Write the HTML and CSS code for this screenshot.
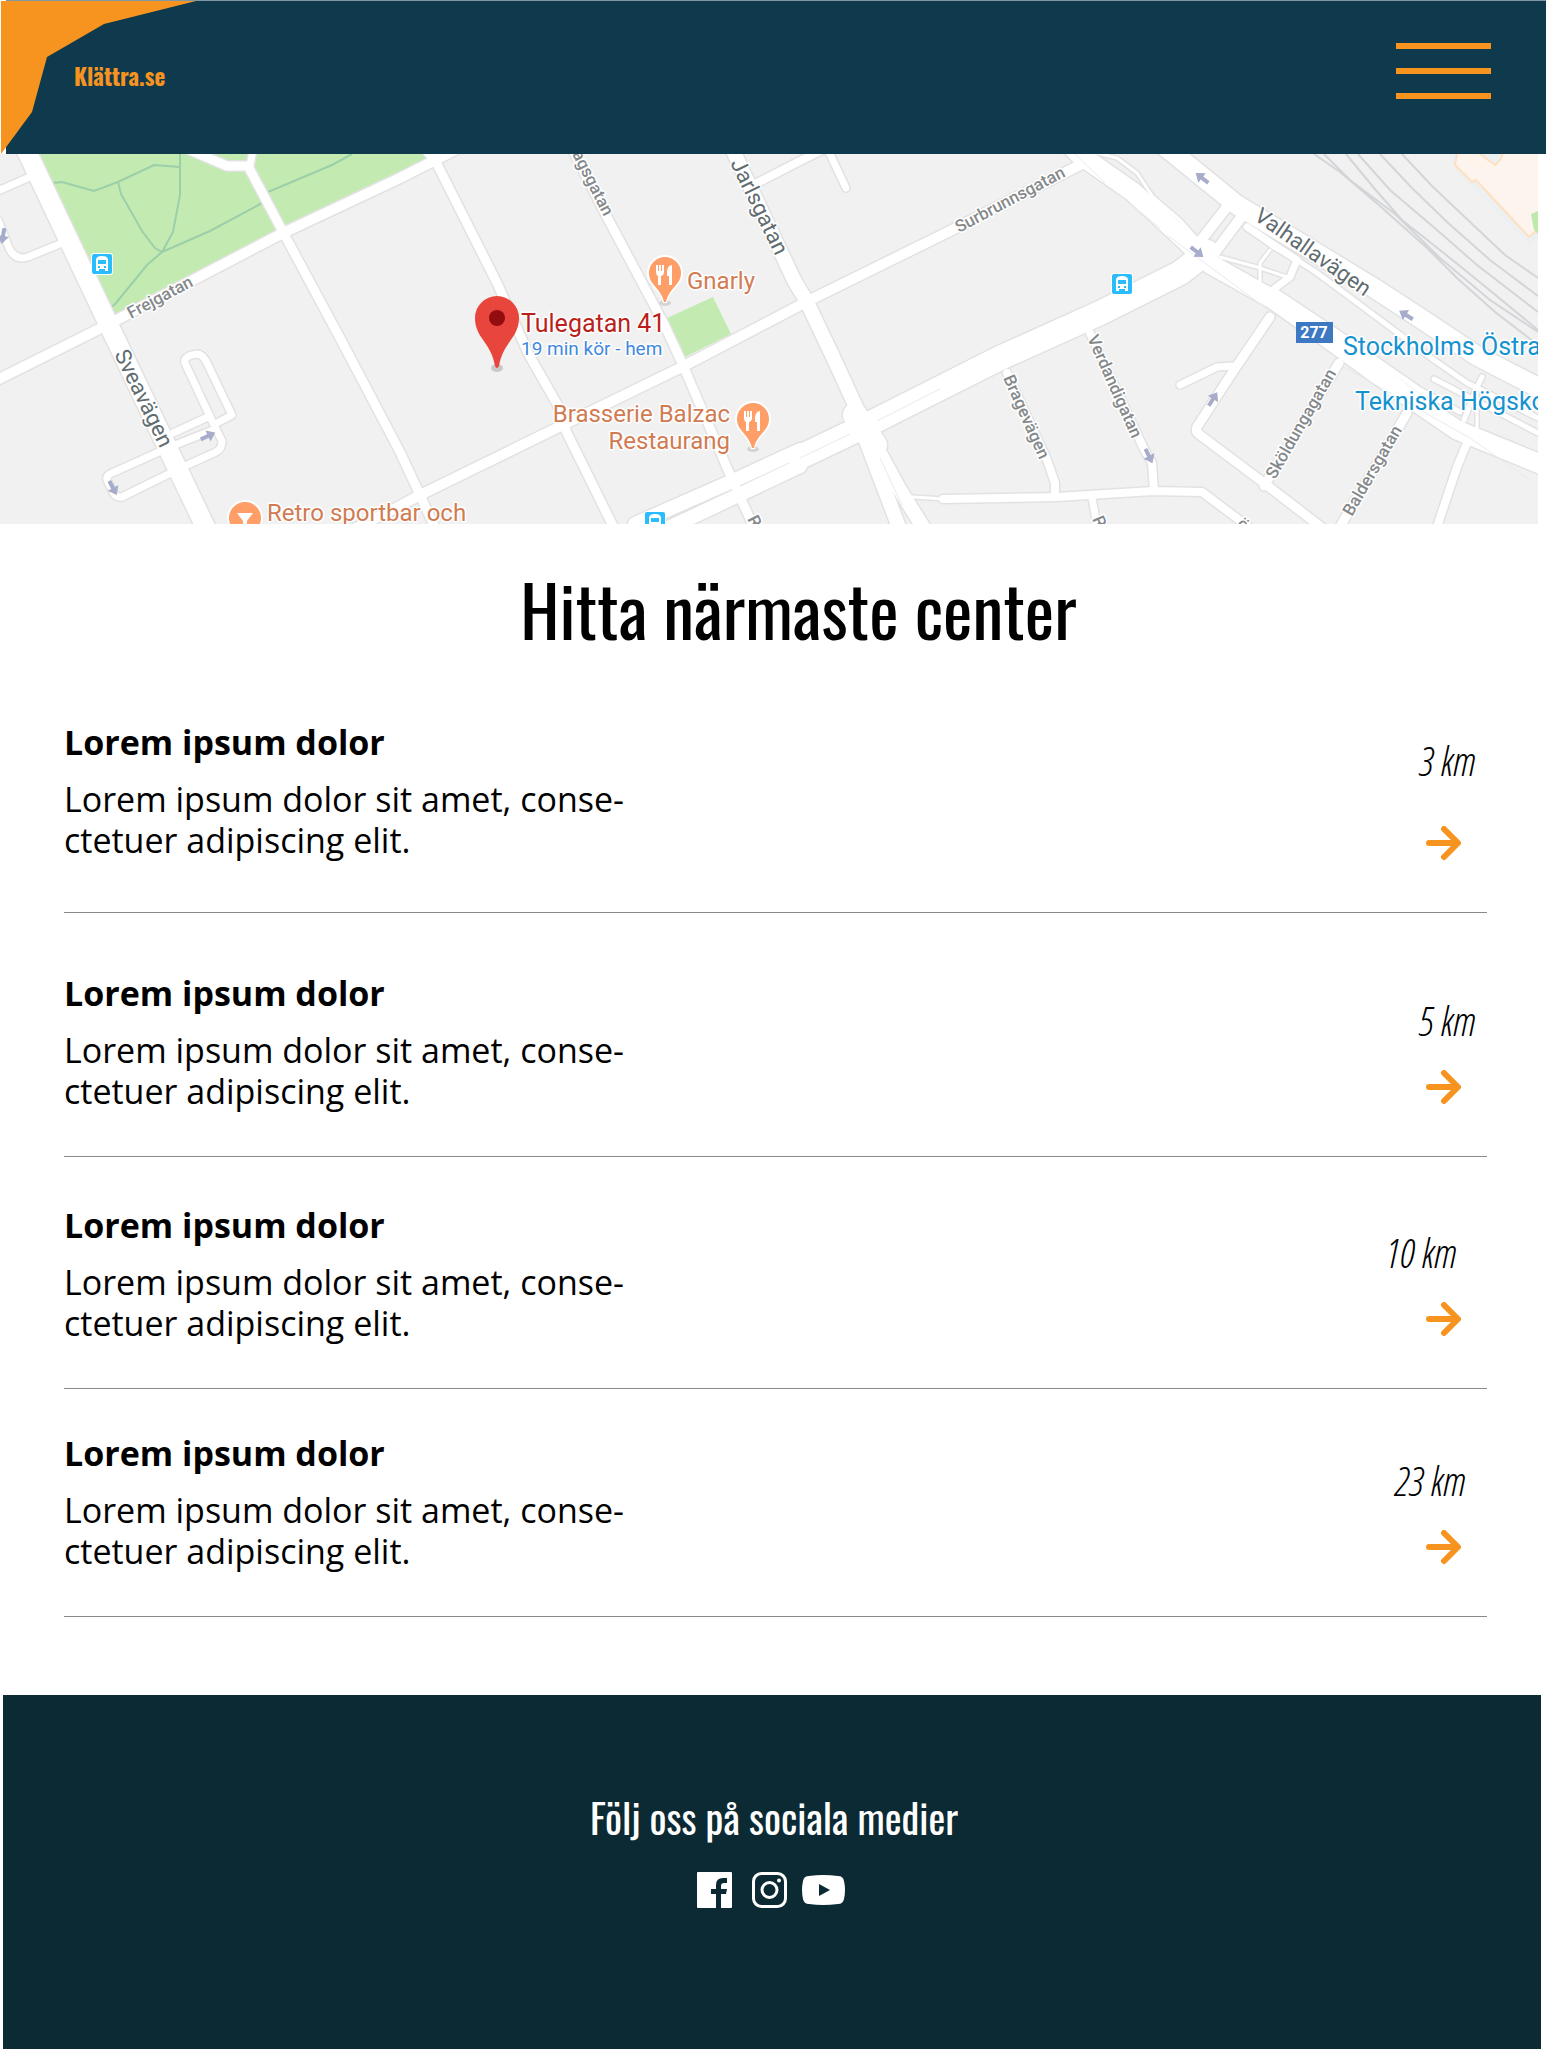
FILE: index.html
```html
<!DOCTYPE html>
<html lang="sv">
<head>
<meta charset="utf-8">
<meta name="viewport" content="width=device-width, initial-scale=1">
<title>Klättra.se</title>
<link rel="stylesheet" href="styles.css">
</head>
<body>
<header class="site-header">
  <svg class="corner" viewBox="0 0 195 153" aria-hidden="true"><path d="M0 0H195L103 23 46 56 31 111 0 153Z"/></svg>
  <a class="logo" href="#">Klättra.se</a>
  <button class="menu" type="button" aria-label="Meny"><span></span><span></span><span></span></button>
</header>

<svg class="map" viewBox="0 154 1538 370" role="img" aria-label="Karta">
  <defs>
    <g id="roads">
      <path class="w4" d="M1097 153 1117 158 1137 173 1153 197 1180 220 1200 242M1220 257 1257 267 1287 277M1270 250 1260 263 1260 282M1477 387V430M913 497 945 499"/>
      <path class="w5" d="M1247 227 1274 247 1297 260 1317 273 1367 310 1434 360 1467 383 1538 418M1274 290 1334 330 1420 390 1460 412M1434 379 1538 433M1482 377 1477 387 1464 420"/>
      <path class="w7" d="M0 190 32 176M-2 220 9 248Q15 261 28 257L62 243M828 150 846 188M1297 260 1290 277 1274 289M1180 385 1217 367 1234 366M1092 498 1098 530M253 150 250 166M1247 227 1297 260M173 433 210 416M185 363Q183 356 197 354 202 354 206 361L232 415 215 424M185 363 213 423 222 441Q222 449 216 452L183 467 122 497Q116 498 113 492L107 480Q106 475 112 473L170 447 213 430"/>
      <path class="w8" d="M757 183 800 161 840 141M943 499 1057 497 1153 491 1202 492 1250 528M1007 373 1047 460 1055 483V497M1090 333 1143 447 1152 463 1154 490M1467 443 1457 467 1436 530"/>
      <path class="w9" d="M190 150 227 166H248L283 232 340 338 400 452 420 495 436 530M418 140 436 162 497 283 528 353 557 404 567 433 615 530M560 125 607 217 663 322 682 363 728 470 755 530M1270 317 1234 370 1197 427Q1195 432 1200 435L1260 480 1325 530M1339 363 1264 486M1407 413 1338 530"/>
      <path class="w10" d="M-5 381 105 326 283 233 400 178 455 150M340 536 400 506 420 495 563 425 682 367 810 300 950 231 1080 165M1195 248 1230 203M1213 255 1245 212"/>
      <path class="w14" d="M728 140 795 282 806 300 833 357 862 420M870 435 900 490 925 530M862 430 900 530M800 466 745 492 660 532M800 450 735 480 635 524"/>
      <path class="w18" d="M20 138 28 154 115 338 204 524 210 536M1157 140 1237 205 1300 243 1374 288 1420 318 1477 356 1545 391M1065 140 1080 155 1133 192 1187 242 1210 264 1274 300 1340 347 1400 391 1457 430 1545 466"/>
      <path class="w22" d="M800 457 867 425 1000 358 1100 313 1180 273 1207 252M855 415 875 445"/>
    </g>
    <g id="bus">
      <rect x="-11" y="-11" width="22" height="22" rx="3" fill="#fff"/>
      <rect x="-10" y="-10" width="20" height="20" rx="2" fill="#29bdfd"/>
      <path fill="#fff" fill-rule="evenodd" d="M-6-4Q-6-8 0-8T6-4V7H3V5H-3V7H-6ZM-4-4V0H4V-4ZM-4 2V4H-2V2ZM2 2V4H4V2Z"/>
    </g>
    <g id="pin">
      <ellipse cx="0" cy="30" rx="6" ry="3" fill="#d4d4d4"/>
      <path fill="#fff" d="M-18 0A18 18 0 0 1 18 0C18 13 5 16 2 30H-2C-5 16-18 13-18 0Z"/>
      <path fill="#ff9e67" d="M-16 0A16 16 0 0 1 16 0C16 12 4 15 1 29H-1C-4 15-16 12-16 0Z"/>
    </g>
    <path id="fork" fill="#fff" d="M-9-9h2v6h1v-6h2v6h1v-6h2v7q0 3-3 4V11h-3V2q-2-1-2-4ZM7-9V11H4V2H2V-3Q3-9 7-9Z"/>
    <path id="oneway" fill="#a6acc9" d="M-8-2H0V-6L8 0 0 6V2H-8Z"/>
  </defs>

  <rect y="154" width="1538" height="370" fill="#f1f1f1"/>
  <path fill="#c3ebb1" d="M38 154 115 314 425 164 440 154ZM667 318 713 297 731 334 685 357Z"/>
  <path class="trail" d="M52 183 62 182 94 191 118 182 154 165 180 167M118 182 121 194 142 231 155 248 162 252M180 154V195L173 232 162 252 147 265 116 303 112 307M162 252 210 231 264 202M268 192 332 165 352 154"/>
  <path fill="#ecf0f1" d="M1450 154 1457 172 1530 245 1538 236V154Z"/>
  <path class="building" d="M1457 154 1455 165 1472 182 1476 180 1529 237 1540 228V150H1505L1500 160 1495 165 1480 154"/>
  <path fill="#bfe9ad" d="M1538 211 1531 214 1534 230 1538 234Z"/>
  <path class="rail" d="M1314 154 1340 172 1380 206 1427 248 1457 278 1495 312 1538 345M1324 154 1350 180 1395 214 1440 258 1490 300 1538 332M1346 154 1374 188 1402 220 1445 254 1487 288 1538 330M1358 154 1390 190 1437 230 1477 265 1538 312M1380 154 1412 188 1447 222 1490 260 1538 296M1402 154 1432 186 1470 222 1505 255 1538 278"/>
  <use href="#roads" class="casing"/>
  <use href="#roads" class="surface"/>
  <path class="seam" d="M800 458 850 434M877 421 940 389M880 458 902 505M1075 154 1105 183M1113 190 1160 228M1167 235 1275 315M1342 366 1470 438 1530 480"/>

  <use href="#oneway" transform="translate(3 236) rotate(100)"/>
  <use href="#oneway" transform="translate(208 436) rotate(-25)"/>
  <use href="#oneway" transform="translate(113 488) rotate(62)"/>
  <use href="#oneway" transform="translate(1149 456) rotate(64)"/>
  <use href="#oneway" transform="translate(1202 178) rotate(218)"/>
  <use href="#oneway" transform="translate(1197 252) rotate(38)"/>
  <use href="#oneway" transform="translate(1406 315) rotate(212)"/>
  <use href="#oneway" transform="translate(1213 399) rotate(-58)"/>

  <g class="street">
    <text transform="translate(131 319) rotate(-28)">Frejgatan</text>
    <text transform="translate(604 217) rotate(63)" text-anchor="end">agsgatan</text>
    <text transform="translate(959 233) rotate(-28)">Surbrunnsgatan</text>
    <text transform="translate(1003 378) rotate(66)">Bragevägen</text>
    <text transform="translate(1087 338) rotate(66)">Verdandigatan</text>
    <text transform="translate(1275 480) rotate(-60)">Sköldungagatan</text>
    <text transform="translate(1352 517) rotate(-60)">Baldersgatan</text>
    <text transform="translate(747 519) rotate(63)">R</text>
    <text transform="translate(1092 519) rotate(66)">R</text>
    <text transform="translate(1236 526) rotate(36)">ö</text>
    <text transform="translate(1442 534) rotate(-72)">n</text>
  </g>
  <g class="avenue">
    <text transform="translate(114 354) rotate(64)">Sveavägen</text>
    <text transform="translate(730 163) rotate(64)">Jarlsgatan</text>
    <text transform="translate(1253 219) rotate(35)">Valhallavägen</text>
  </g>

  <use href="#bus" x="102" y="264"/>
  <use href="#bus" x="1122" y="284"/>
  <use href="#bus" x="655" y="522"/>
  <use href="#pin" x="665" y="273"/><use href="#fork" x="665" y="274"/>
  <use href="#pin" x="753" y="419"/><use href="#fork" x="753" y="420"/>
  <use href="#pin" x="245" y="518"/>
  <path fill="#fff" d="M237 513H253L247 521V526H243V521Z"/>

  <ellipse cx="497" cy="368" rx="6" ry="4" fill="#c9c9c9"/>
  <path fill="#e8453c" d="M475 318A22 22 0 0 1 519 318C519 338 503 342 499 366Q497 370 495 366C491 342 475 338 475 318Z"/>
  <circle cx="497" cy="318" r="8" fill="#930c10"/>

  <g class="place">
    <text x="687" y="289">Gnarly</text>
    <text x="730" y="422" text-anchor="end">Brasserie Balzac</text>
    <text x="730" y="449" text-anchor="end">Restaurang</text>
    <text x="267" y="521">Retro sportbar och</text>
  </g>
  <text class="target" x="521" y="332">Tulegatan 41</text>
  <text class="travel" x="521" y="355">19 min kör - hem</text>
  <g class="station">
    <text x="1343" y="355">Stockholms Östra</text>
    <text x="1355" y="410">Tekniska Högskolan</text>
  </g>
  <rect x="1296" y="322" width="37" height="21" fill="#3d78c3"/>
  <text class="route" x="1314" y="338" text-anchor="middle">277</text>
</svg>

<main class="content">
  <h1>Hitta närmaste center</h1>
  <ul class="centers">
    <li class="center first">
      <div><h2>Lorem ipsum dolor</h2><p>Lorem ipsum dolor sit amet, conse-<br>ctetuer adipiscing elit.</p></div>
      <div class="side"><span class="distance">3 km</span><a class="go" href="#" aria-label="Visa center"><svg viewBox="0 0 35 35"><path d="M3 17H31M18 3 32 17 18 31"/></svg></a></div>
    </li>
    <li class="center second">
      <div><h2>Lorem ipsum dolor</h2><p>Lorem ipsum dolor sit amet, conse-<br>ctetuer adipiscing elit.</p></div>
      <div class="side"><span class="distance">5 km</span><a class="go" href="#" aria-label="Visa center"><svg viewBox="0 0 35 35"><path d="M3 17H31M18 3 32 17 18 31"/></svg></a></div>
    </li>
    <li class="center third">
      <div><h2>Lorem ipsum dolor</h2><p>Lorem ipsum dolor sit amet, conse-<br>ctetuer adipiscing elit.</p></div>
      <div class="side"><span class="distance">10 km</span><a class="go" href="#" aria-label="Visa center"><svg viewBox="0 0 35 35"><path d="M3 17H31M18 3 32 17 18 31"/></svg></a></div>
    </li>
    <li class="center fourth">
      <div><h2>Lorem ipsum dolor</h2><p>Lorem ipsum dolor sit amet, conse-<br>ctetuer adipiscing elit.</p></div>
      <div class="side"><span class="distance">23 km</span><a class="go" href="#" aria-label="Visa center"><svg viewBox="0 0 35 35"><path d="M3 17H31M18 3 32 17 18 31"/></svg></a></div>
    </li>
  </ul>
</main>

<footer class="site-footer">
  <h2>Följ oss på sociala medier</h2>
  <nav class="social" aria-label="Sociala medier">
    <a href="#" aria-label="Facebook"><svg width="35" height="36" viewBox="0 0 35 36"><path fill="#fff" d="M1 0H34Q35 0 35 1V35Q35 36 34 36H24V22H29L30 17H24V14Q24 11 27 11H30V6H26Q19 6 19 13V17H14V22H19V36H1Q0 36 0 35V1Q0 0 1 0Z"/></svg></a>
    <a href="#" aria-label="Instagram"><svg width="35" height="36" viewBox="0 0 35 36" fill="none" stroke="#fff" stroke-width="3"><rect x="1.500" y="1.500" width="32" height="33" rx="8"/><circle cx="17.500" cy="18" r="7.500"/><circle cx="27" cy="8.500" r="2" fill="#fff" stroke="none"/></svg></a>
    <a class="youtube" href="#" aria-label="YouTube"><svg width="43" height="30" viewBox="0 0 43 30"><path fill="#fff" fill-rule="evenodd" d="M7 1Q21-1 36 1 41 1 42 6 44 15 42 24 41 29 36 29 21 31 7 29 2 29 1 24-1 15 1 6 2 1 7 1ZM17 9V21L28 15Z"/></svg></a>
  </nav>
</footer>
</body>
</html>
```
FILE: styles.css
```css
:root {
  --orange: #f7941f;
  --navy: #0f3a4d;
  --deep: #0c2a33;
  --condensed: Oswald, "Liberation Sans Narrow", "Liberation Sans", sans-serif;
  --condensed-light: "Open Sans Condensed Light", "Open Sans Condensed", Oswald, "Liberation Sans Narrow", sans-serif;
}

* { box-sizing: border-box; }

body {
  margin: 0;
  min-height: 100vh;
  display: flex;
  flex-direction: column;
  background: #fff;
  color: #000;
  font-family: "Open Sans", sans-serif;
}

h1, h2, p, ul { margin: 0; padding: 0; }
svg { display: block; }

/* Header */
.site-header {
  position: relative;
  display: flex;
  align-items: center;
  justify-content: space-between;
  height: 154px;
  margin: 0 1px 0 6px;
  padding: 0 55px 0 68px;
  border-top: 1px solid #7f98a3;
  background: var(--navy);
}
.corner {
  position: absolute;
  left: -5px;
  top: 0;
  width: 195px;
  fill: var(--orange);
}
.logo {
  position: relative;
  margin-bottom: 4px;
  color: var(--orange);
  font: bold 23px/32px var(--condensed);
  text-decoration: none;
}
.menu {
  display: flex;
  flex-direction: column;
  gap: 19px;
  width: 95px;
  margin-bottom: 14px;
  padding: 0;
  border: 0;
  background: none;
}
.menu span { height: 6px; background: var(--orange); }

/* Map */
.map { width: calc(100% - 9px); font-family: Roboto, sans-serif; }
.map text { paint-order: stroke; stroke: #fff; stroke-width: 3px; stroke-linejoin: round; }
#roads path { fill: none; stroke-linejoin: round; stroke-linecap: round; stroke-width: calc(var(--w) + var(--edge)); }
.casing { stroke: #e2e2e2; --edge: 3px; }
.surface { stroke: #fff; --edge: 0px; }
.w4 { --w: 3px; }
.w5 { --w: 5px; }
.w7 { --w: 7px; }
.w8 { --w: 8px; }
.w9 { --w: 9px; }
.w10 { --w: 10px; }
.w14 { --w: 14px; }
.w18 { --w: 19px; }
.w22 { --w: 24px; }
.trail { fill: none; stroke: #9bcfa9; stroke-width: 2px; }
.rail { fill: none; stroke: #d3d5d8; stroke-width: 2px; }
.seam { fill: none; stroke: #e6ebf0; stroke-width: 1px; }
.building { fill: #fdf4ed; stroke: #ffdfbf; stroke-width: 2px; }
.street { font-size: 17px; font-weight: 500; fill: #85898b; }
.avenue { font-size: 22px; fill: #5f6c70; }
.place { font-size: 24px; fill: #d17b52; }
.target { font-size: 25px; fill: #bb1f1b; }
.travel { font-size: 19px; fill: #4288e0; }
.station { font-size: 25px; fill: #1592d0; }
.map .route { font-size: 16px; font-weight: 700; fill: #fff; stroke: none; }

/* Centre list */
.content { padding: 0 60px 78px 64px; }
h1 {
  margin: 34px 0 64px 46px;
  font: 400 70px/100px var(--condensed);
  text-align: center;
}
.centers { list-style: none; }
.center {
  display: flex;
  justify-content: space-between;
  padding: 44px 0;
  border-bottom: 1px solid #8a8a8a;
  font-size: 34px;
  line-height: 41px;
}
.center h2 { margin-bottom: 16px; font-size: 34px; line-height: 41px; }
.first { padding: 0 0 51px; }
.second { padding-top: 60px; }
.third { padding-top: 48px; }
.side {
  display: flex;
  flex-direction: column;
  align-items: flex-end;
  justify-content: flex-end;
  gap: 29px;
  padding-bottom: 7px;
}
.first .side { gap: 45px; padding-bottom: 0; }
.distance {
  margin-right: 12px;
  font: italic 300 40px/41px var(--condensed-light);
}
.third .distance { margin-right: 31px; }
.fourth .distance { margin-right: 22px; }
.go { margin-right: 26px; }
.go svg {
  width: 35px;
  fill: none;
  stroke: var(--orange);
  stroke-width: 6px;
  stroke-linecap: round;
  stroke-linejoin: round;
}

/* Footer */
.site-footer {
  flex: 1;
  margin: 0 6px 0 3px;
  padding: 98px 24px;
  background: var(--deep);
  color: #fff;
  text-align: center;
}
.site-footer h2 { padding-left: 4px; font: 400 40px/48px var(--condensed); }
.social {
  display: flex;
  align-items: center;
  justify-content: center;
  gap: 20px;
  margin-top: 31px;
  padding-right: 2px;
}
.youtube { margin-left: -5px; }
```
